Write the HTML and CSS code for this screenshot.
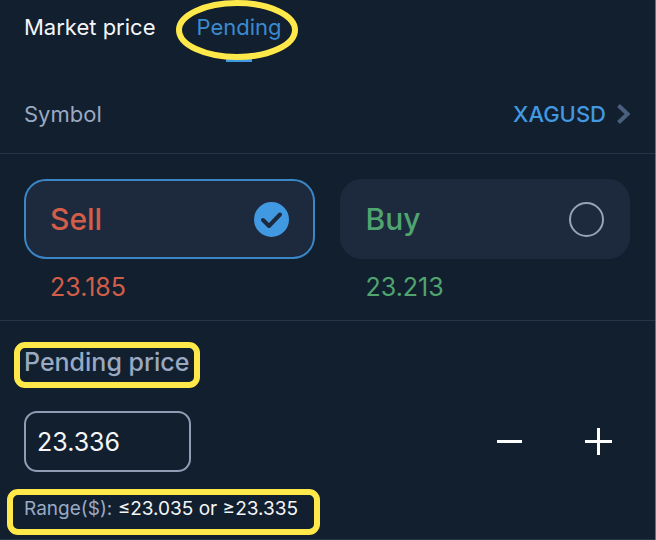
FILE: index.html
```html
<!DOCTYPE html>
<html lang="en">
<head>
    <meta charset="UTF-8">
    <meta name="viewport" content="width=device-width, initial-scale=1">
    <title>Pending order</title>
    <link rel="stylesheet" href="styles.css">
</head>
<body>

<form class="order">
    <nav class="tabs">
        <a class="tab" href="#market">Market price</a>
        <a class="tab active" href="#pending">Pending
            <svg class="circle-mark" width="122" height="60" viewBox="0 0 122 60"><ellipse cx="61" cy="30" rx="58" ry="27"/></svg>
        </a>
    </nav>

    <div class="symbol-row">
        <span>Symbol</span>
        <a class="symbol" href="#symbol">XAGUSD
            <svg width="13" height="20" viewBox="0 0 13 20"><path d="M1.5 1.5 L10.5 10 L1.5 18.5"/></svg>
        </a>
    </div>

    <div class="sides">
        <div class="side sell">
            <label class="card">
                Sell
                <span class="radio">
                    <input type="radio" name="side" value="sell" checked>
                    <svg width="35" height="35" viewBox="0 0 35 35"><path d="M9 18 L15 24 L26 12.5"/></svg>
                </span>
            </label>
            <div class="quote">23.185</div>
        </div>
        <div class="side buy">
            <label class="card">
                Buy
                <span class="radio">
                    <input type="radio" name="side" value="buy">
                    <svg width="35" height="35" viewBox="0 0 35 35"><path d="M9 18 L15 24 L26 12.5"/></svg>
                </span>
            </label>
            <div class="quote">23.213</div>
        </div>
    </div>

    <div class="pending">
        <label class="pending-label marked" for="price">Pending price</label>
        <div class="price-row">
            <input class="price" id="price" type="text" value="23.336">
            <div class="stepper">
                <button type="button" aria-label="Decrease">
                    <svg width="27" height="27" viewBox="0 0 27 27"><path d="M1 13.5 H26"/></svg>
                </button>
                <button type="button" aria-label="Increase">
                    <svg width="27" height="27" viewBox="0 0 27 27"><path d="M0 13.5 H27 M13.5 0 V27"/></svg>
                </button>
            </div>
        </div>
        <div class="range marked">Range($): <span>≤23.035 or ≥23.335</span></div>
    </div>
</form>

</body>
</html>
```

FILE: styles.css
```css
* { box-sizing: border-box; }
body { margin: 0; background-color: #121f2e; color: #9aa9c2; font-family: Inter, sans-serif; font-size: 22px; line-height: 28px; }
a { text-decoration: none; }
svg { display: block; fill: none; }

.order { border-right: 1px solid #66717c; }

.tabs { display: flex; gap: 41px; padding: 0 24px; height: 62px; }
.tab { position: relative; padding-top: 13px; color: #f4f6f8; }
.tab.active { color: #3b8bd0; }
.tab.active::after { content: ""; position: absolute; left: 50%; bottom: 0; width: 26px; height: 4px; margin-left: -13px; background-color: #4199e1; }
/* hand-drawn style highlights */
.circle-mark { position: absolute; z-index: 1; left: -20px; top: 0; stroke: #ffe94a; stroke-width: 6; }
.marked { position: relative; width: fit-content; }
.marked::after { content: ""; position: absolute; border: 6px solid #ffe94a; border-radius: 11px; pointer-events: none; }

.symbol-row { display: flex; justify-content: space-between; padding: 38px 25px 25px 24px; border-bottom: 1px solid #263546; }
.symbol { display: flex; align-items: center; gap: 11px; color: #4199e1; font-weight: 500; }
.symbol svg { stroke: #4b5f7e; stroke-width: 4; }

.sides { display: flex; gap: 25px; padding: 25px 25px 17px 24px; border-bottom: 1px solid #263546; }
.side { flex: 1; }
.sell { color: #d25e49; }
.buy { color: #50a46f; }
.card { display: flex; align-items: center; justify-content: space-between; height: 80px; padding: 0 24px; border: 2px solid #1d2a3e; border-radius: 22px; background-color: #1d2a3e; font-size: 30px; font-weight: 500; }
.card:has(input:checked) { border-color: #3a87c8; }
.quote { margin-top: 12px; padding-left: 26px; font-size: 25px; line-height: 32px; }

.radio { display: grid; }
.radio > * { grid-area: 1 / 1; }
.radio input { appearance: none; width: 35px; height: 35px; margin: 0; border: 2px solid #95a3bb; border-radius: 50%; }
.radio input:checked { border-color: #4199e1; background-color: #4199e1; }
.radio svg { visibility: hidden; pointer-events: none; stroke: #1d2a3e; stroke-width: 4; stroke-linecap: round; stroke-linejoin: round; }
.radio input:checked + svg { visibility: visible; }

.pending { padding: 25px 43px 18px 24px; border-bottom: 1px solid #263546; }
.pending-label { display: block; font-size: 25px; font-weight: 500; line-height: 32px; }
.pending-label::after { inset: -4px -11px -10px -10px; }
.price-row { display: flex; align-items: center; justify-content: space-between; margin-top: 33px; }
.price { width: 167px; height: 61px; padding: 0 11px; border: 2px solid #8e9cb4; border-radius: 13px; background-color: transparent; color: #f4f6f8; font-family: inherit; font-size: 25px; }
.stepper { display: flex; gap: 62px; }
.stepper button { padding: 0; border: 0; background: none; }
.stepper svg { stroke: #fff; stroke-width: 3; }
.range { margin-top: 25px; font-size: 19px; line-height: 24px; }
.range span { color: #f4f6f8; }
.range::after { inset: -8px -22px -14px -17px; }
```
